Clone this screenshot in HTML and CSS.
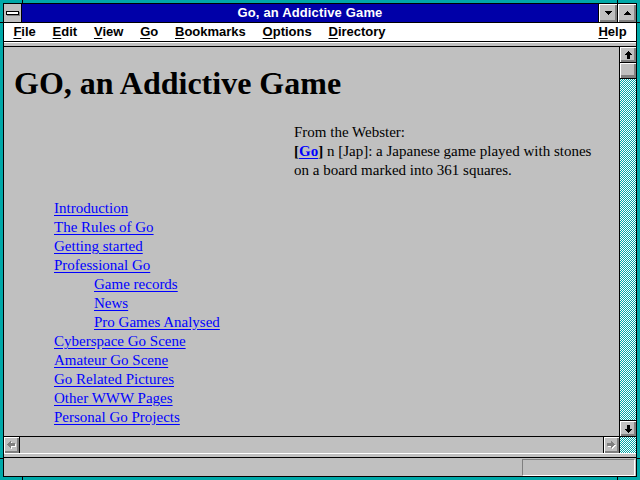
FILE: index.html
```html
<!DOCTYPE html>
<html>
	<head>
		<meta charset="UTF-8">
		<title>Go, an Addictive Game</title>
		<link rel="stylesheet" href="styles.css">
	</head>
	<body>
		<div id="frame">
			<span class="notch n_top n_l"></span>
			<span class="notch n_top n_r"></span>
			<span class="notch n_bot n_l"></span>
			<span class="notch n_bot n_r"></span>
			<span class="notch n_left n_t"></span>
			<span class="notch n_left n_b"></span>
			<span class="notch n_right n_t"></span>
			<span class="notch n_right n_b"></span>
			<div id="win">
				<div id="title_bar">
					<div class="sys_btn"><span class="sys_bar"></span></div>
					<div class="caption">Go, an Addictive Game</div>
					<div class="cap_btn">
						<svg width="7" height="4" viewBox="0 0 7 4"><path d="M0 0h7v1h-7z M1 1h5v1h-5z M2 2h3v1h-3z M3 3h1v1h-1z"/></svg>
					</div>
					<div class="cap_btn">
						<svg width="7" height="4" viewBox="0 0 7 4"><path d="M3 0h1v1h-1z M2 1h3v1h-3z M1 2h5v1h-5z M0 3h7v1h-7z"/></svg>
					</div>
				</div>
				<div id="menu_bar">
					<span class="menu_item"><u>F</u>ile</span>
					<span class="menu_item"><u>E</u>dit</span>
					<span class="menu_item"><u>V</u>iew</span>
					<span class="menu_item"><u>G</u>o</span>
					<span class="menu_item"><u>B</u>ookmarks</span>
					<span class="menu_item"><u>O</u>ptions</span>
					<span class="menu_item"><u>D</u>irectory</span>
					<span class="menu_item menu_help"><u>H</u>elp</span>
				</div>
				<div id="tool_strip"></div>
				<div id="view">
					<div id="page">
						<h1>GO, an Addictive Game</h1>
						<div class="webster">
							From the Webster:<br>
							<b>[<a href="#">Go</a>]</b> n [Jap]: a Japanese game played with stones<br>
							on a board marked into 361 squares.
						</div>
						<ul class="links">
							<li><a href="#">Introduction</a></li>
							<li><a href="#">The Rules of Go</a></li>
							<li><a href="#">Getting started</a></li>
							<li><a href="#">Professional Go</a>
								<ul>
									<li><a href="#">Game records</a></li>
									<li><a href="#">News</a></li>
									<li><a href="#">Pro Games Analysed</a></li>
								</ul>
							</li>
							<li><a href="#">Cyberspace Go Scene</a></li>
							<li><a href="#">Amateur Go Scene</a></li>
							<li><a href="#">Go Related Pictures</a></li>
							<li><a href="#">Other WWW Pages</a></li>
							<li><a href="#">Personal Go Projects</a></li>
						</ul>
					</div>
					<div id="vscroll">
						<div class="sb_btn sb_up">
							<svg width="7" height="8" viewBox="0 0 7 8"><path d="M3 0h1v1h-1z M2 1h3v1h-3z M1 2h5v1h-5z M0 3h7v1h-7z M2 4h3v4h-3z"/></svg>
						</div>
						<div class="sb_thumb"></div>
						<div class="sb_track">
							<svg class="dither" width="16" height="400">
								<path class="chk" d="M0.5 0V400M2.5 0V400M4.5 0V400M6.5 0V400M8.5 0V400M10.5 0V400M12.5 0V400M14.5 0V400"/>
								<path class="chk" d="M1.5 1V400M3.5 1V400M5.5 1V400M7.5 1V400M9.5 1V400M11.5 1V400M13.5 1V400M15.5 1V400"/>
							</svg>
						</div>
						<div class="sb_btn sb_down">
							<svg width="7" height="8" viewBox="0 0 7 8"><path d="M2 0h3v4h-3z M0 4h7v1h-7z M1 5h5v1h-5z M2 6h3v1h-3z M3 7h1v1h-1z"/></svg>
						</div>
					</div>
					<div id="hscroll">
						<div class="sb_btn sb_left">
							<svg width="9" height="8" viewBox="0 0 9 8">
								<path class="emboss" transform="translate(1 1)" d="M0 3h1v1h-1z M1 2h1v3h-1z M2 1h1v5h-1z M3 0h1v7h-1z M4 2h4v3h-4z"/>
								<path class="dim" d="M0 3h1v1h-1z M1 2h1v3h-1z M2 1h1v5h-1z M3 0h1v7h-1z M4 2h4v3h-4z"/>
							</svg>
						</div>
						<div class="sb_htrack"></div>
						<div class="sb_btn sb_right">
							<svg width="9" height="8" viewBox="0 0 9 8">
								<path class="emboss" transform="translate(1 1)" d="M7 3h1v1h-1z M6 2h1v3h-1z M5 1h1v5h-1z M4 0h1v7h-1z M0 2h4v3h-4z"/>
								<path class="dim" d="M7 3h1v1h-1z M6 2h1v3h-1z M5 1h1v5h-1z M4 0h1v7h-1z M0 2h4v3h-4z"/>
							</svg>
						</div>
					</div>
					<div class="sb_corner">
						<svg class="dither" width="16" height="16">
							<path class="chk" d="M0.5 0V16M2.5 0V16M4.5 0V16M6.5 0V16M8.5 0V16M10.5 0V16M12.5 0V16M14.5 0V16"/>
							<path class="chk" d="M1.5 1V16M3.5 1V16M5.5 1V16M7.5 1V16M9.5 1V16M11.5 1V16M13.5 1V16M15.5 1V16"/>
						</svg>
					</div>
				</div>
				<div id="status_sep"></div>
				<div id="status_bar">
					<div class="status_box"></div>
				</div>
			</div>
		</div>
	</body>
</html>
```

FILE: styles.css
```css
*{margin: 0;padding: 0;box-sizing: border-box;}
html,body{width: 640px;height: 480px;overflow: hidden;}
#frame{
	width: 640px;
	height: 480px;
	padding: 3px;
	background-color: #00a8a8;
	position: relative;
}
/* little marks on the sizing border */
.notch{position: absolute;background-color: #000;}
.n_top,.n_bot{width: 1px;height: 3px;}
.n_top{top: 0;}
.n_bot{bottom: 0;}
.n_l{left: 22px;}
.n_r{left: 617px;}
.n_left,.n_right{width: 3px;height: 1px;}
.n_left{left: 0;}
.n_right{right: 0;}
.n_t{top: 22px;}
.n_b{top: 458px;}
#win{
	height: 100%;
	border: 1px solid #000;
	display: flex;
	flex-direction: column;
	background-color: #c0c0c0;
	font-family: "Liberation Sans", Arial, sans-serif;
}
#title_bar{
	height: 19px;
	display: flex;
	border-bottom: 1px solid #000;
	flex-shrink: 0;
}
.sys_btn{
	width: 18px;
	border-right: 1px solid #000;
	background-color: #c0c0c0;
	display: flex;
	align-items: center;
	justify-content: center;
}
.sys_bar{
	width: 13px;
	height: 4px;
	background-color: #fff;
	border: 1px solid #000;
	box-shadow: 1px 1px 0 #808080;
}
.caption{
	flex: 1;
	background-color: #0000a8;
	color: #fff;
	font-weight: bold;
	font-size: 13px;
	line-height: 18px;
	text-align: center;
	letter-spacing: 0.15px;
}
.cap_btn{
	width: 19px;
	border-left: 1px solid #000;
	background-color: #c0c0c0;
	box-shadow: inset 1px 1px #fff, inset -1px -1px #808080, inset -2px -2px #808080;
	display: flex;
	align-items: center;
	justify-content: center;
}
.cap_btn svg{display: block;margin-top: -1px;}
svg path{fill: #000;}
#menu_bar{
	height: 19px;
	background-color: #fff;
	border-bottom: 1px solid #000;
	display: flex;
	padding: 0 1px;
	font-size: 13px;
	font-weight: bold;
	line-height: 18px;
	flex-shrink: 0;
}
.menu_item{padding: 0 8.4px;}
.menu_item u{text-underline-offset: 2px;}
.menu_help{margin-left: auto;}
#tool_strip{
	height: 5px;
	border-top: 1px solid #fff;
	border-bottom: 1px solid #000;
	flex-shrink: 0;
}
#view{
	flex: 1;
	display: grid;
	grid-template-columns: 1fr 16px;
	grid-template-rows: 1fr 16px;
	gap: 1px;
	background-color: #000;
	min-height: 0;
}
#page{
	background-color: #c0c0c0;
	padding: 0 10px;
	overflow: hidden;
	font-family: "Liberation Serif", "Times New Roman", serif;
	font-size: 15px;
	line-height: 19px;
	color: #000;
}
#page h1{
	font-size: 32px;
	line-height: 36px;
	margin-top: 18px;
}
#page a{color: #0000ff;text-underline-offset: 2px;}
.webster{margin: 22px 0 0 280px;}
.links{margin-top: 19px;padding-left: 40px;list-style: none;}
.links ul{padding-left: 40px;list-style: none;}
#vscroll{
	display: flex;
	flex-direction: column;
	background-color: #c0c0c0;
	min-height: 0;
}
.sb_btn{
	height: 16px;
	flex-shrink: 0;
	background-color: #c0c0c0;
	box-shadow: inset 1px 1px #fff, inset -1px -1px #808080, inset -2px -2px #808080;
	display: flex;
	align-items: center;
	justify-content: center;
}
.sb_btn svg{display: block;}
.sb_up{border-bottom: 1px solid #000;}
.sb_down{border-top: 1px solid #000;}
.sb_thumb{
	height: 16px;
	flex-shrink: 0;
	border-bottom: 1px solid #000;
	background-color: #c0c0c0;
	box-shadow: inset 1px 1px #fff, inset -1px -2px #808080, inset -2px -3px #808080;
}
.sb_track{flex: 1;overflow: hidden;min-height: 0;background-color: #fff;}
.sb_corner{overflow: hidden;background-color: #fff;}
.dither{display: block;}
svg path.chk{fill: none;stroke: #00a8a8;stroke-width: 1;stroke-dasharray: 1 1;}
#hscroll{
	display: flex;
	background-color: #c0c0c0;
}
.sb_left,.sb_right{width: 16px;height: 16px;}
.sb_left{border-right: 1px solid #000;}
.sb_right{border-left: 1px solid #000;}
.sb_htrack{flex: 1;}
svg path.dim{fill: #808080;}
svg path.emboss{fill: #fff;}
#status_sep{
	height: 5px;
	border-top: 1px solid #fff;
	border-bottom: 1px solid #000;
	flex-shrink: 0;
}
#status_bar{
	height: 18px;
	display: flex;
	justify-content: flex-end;
	padding: 1px 1px 0 0;
	flex-shrink: 0;
}
.status_box{
	width: 113px;
	border-top: 1px solid #808080;
	border-left: 1px solid #808080;
	border-right: 1px solid #fff;
	border-bottom: 1px solid #fff;
}
```
